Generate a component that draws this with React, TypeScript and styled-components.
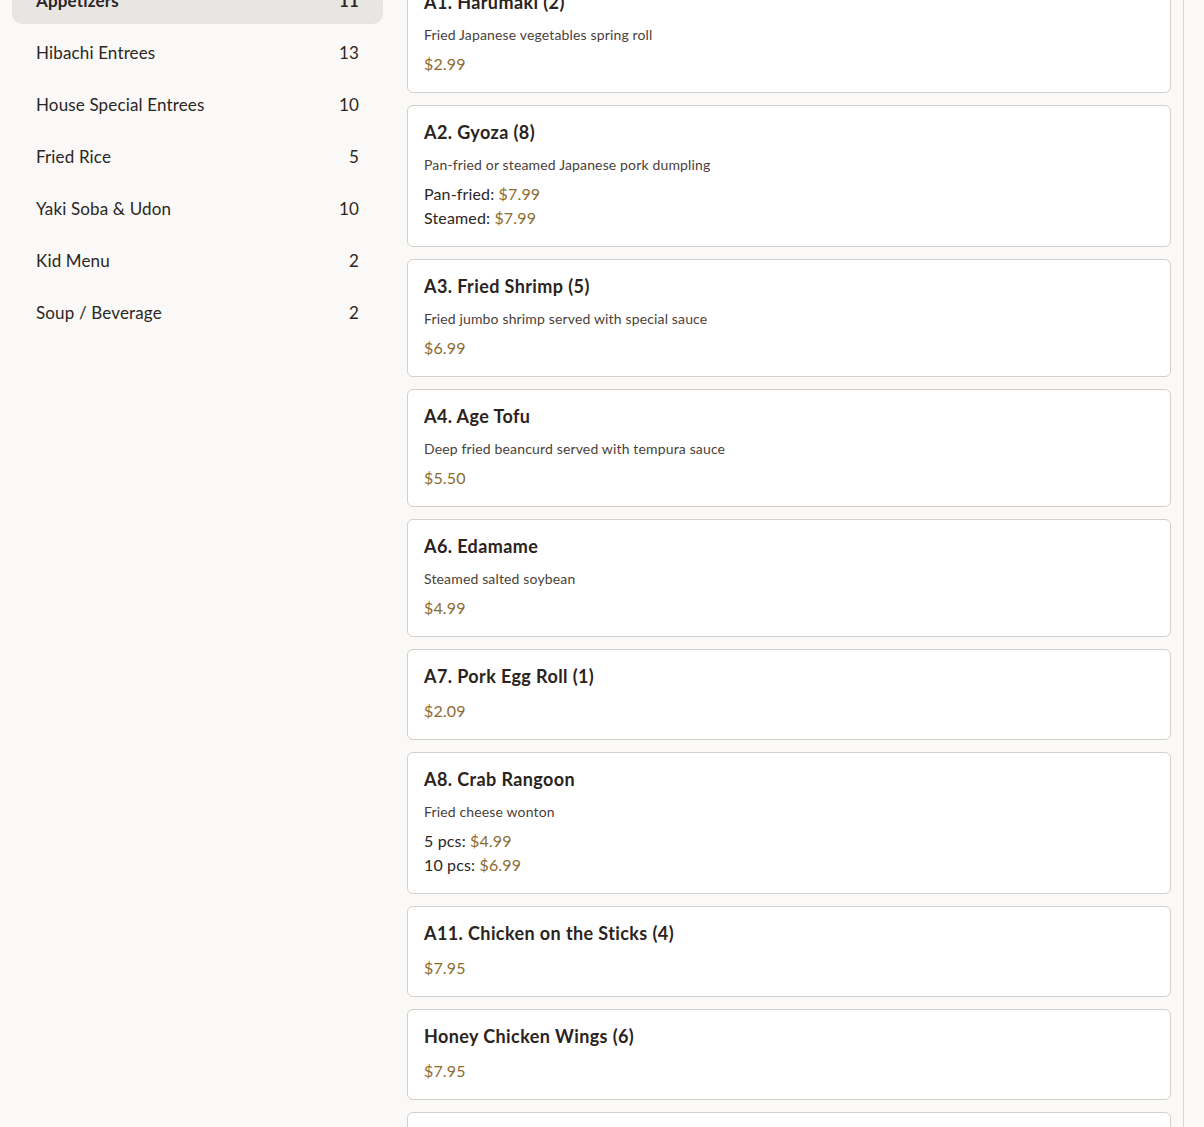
import React, { useLayoutEffect, useRef } from "react";
import styled, { createGlobalStyle } from "styled-components";

interface PriceOption {
  label?: string;
  price: string;
}

interface MenuItem {
  name: string;
  description?: string;
  prices: PriceOption[];
}

const GlobalStyle = createGlobalStyle`
  html, body {
    margin: 0;
    padding: 0;
    height: 100%;
    background: #faf9f7;
    overflow: hidden;
  }
  body {
    font-family: "Lato", "Noto Sans", sans-serif;
    color: #2b2623;
  }
  * {
    box-sizing: border-box;
  }
`;

const Scroller = styled.div`
  height: 100vh;
  width: 1184px;
  overflow-y: auto;
  border-right: 1px solid #d9d6d2;
  scrollbar-width: none;

  &::-webkit-scrollbar {
    display: none;
  }
`;

const Layout = styled.div`
  display: grid;
  grid-template-columns: 395px 1fr;
  align-items: start;
`;

const Sidebar = styled.nav`
  display: flex;
  flex-direction: column;
  gap: 4px;
  padding: 13px 12px 12px;
`;

const CategoryRow = styled.div<{ $active?: boolean }>`
  display: flex;
  align-items: center;
  justify-content: space-between;
  height: 48px;
  padding: 0 24px;
  border-radius: 10px;
  font-size: 17px;
  letter-spacing: 0.15px;
  font-weight: ${(props) => (props.$active ? 700 : 400)};
  background: ${(props) => (props.$active ? "#e8e6e3" : "transparent")};
  color: #2b2623;
  cursor: pointer;
`;

const Main = styled.main`
  display: flex;
  flex-direction: column;
  gap: 12px;
  padding: 12px;
`;

const Card = styled.div`
  background: #ffffff;
  border: 1px solid #d3cfca;
  border-radius: 6px;
  padding: 15px 16px 16px;
`;

const Title = styled.h3`
  margin: 0 0 12px;
  font-size: 18px;
  line-height: 22px;
  letter-spacing: 0.4px;
  font-weight: 700;
  color: #2b2320;
`;

const Description = styled.p`
  margin: 0 0 8px;
  font-size: 14px;
  line-height: 19px;
  letter-spacing: 0.15px;
  color: #4a3f39;
`;

const PriceLine = styled.div`
  font-size: 16px;
  line-height: 24px;
  letter-spacing: 0.15px;
  color: #2b2623;
`;

const Price = styled.span`
  color: #8b6c2f;
`;

const categories = [
  { name: "Appetizers", count: 11 },
  { name: "Hibachi Entrees", count: 13 },
  { name: "House Special Entrees", count: 10 },
  { name: "Fried Rice", count: 5 },
  { name: "Yaki Soba & Udon", count: 10 },
  { name: "Kid Menu", count: 2 },
  { name: "Soup / Beverage", count: 2 },
];

const items: MenuItem[] = [
  {
    name: "A1. Harumaki (2)",
    description: "Fried Japanese vegetables spring roll",
    prices: [{ price: "$2.99" }],
  },
  {
    name: "A2. Gyoza (8)",
    description: "Pan-fried or steamed Japanese pork dumpling",
    prices: [
      { label: "Pan-fried", price: "$7.99" },
      { label: "Steamed", price: "$7.99" },
    ],
  },
  {
    name: "A3. Fried Shrimp (5)",
    description: "Fried jumbo shrimp served with special sauce",
    prices: [{ price: "$6.99" }],
  },
  {
    name: "A4. Age Tofu",
    description: "Deep fried beancurd served with tempura sauce",
    prices: [{ price: "$5.50" }],
  },
  {
    name: "A6. Edamame",
    description: "Steamed salted soybean",
    prices: [{ price: "$4.99" }],
  },
  {
    name: "A7. Pork Egg Roll (1)",
    prices: [{ price: "$2.09" }],
  },
  {
    name: "A8. Crab Rangoon",
    description: "Fried cheese wonton",
    prices: [
      { label: "5 pcs", price: "$4.99" },
      { label: "10 pcs", price: "$6.99" },
    ],
  },
  {
    name: "A11. Chicken on the Sticks (4)",
    prices: [{ price: "$7.95" }],
  },
  {
    name: "Honey Chicken Wings (6)",
    prices: [{ price: "$7.95" }],
  },
  {
    name: "Shrimp Tempura (4)",
    description: "Lightly battered shrimp with tempura sauce",
    prices: [{ price: "$7.95" }],
  },
  {
    name: "Spring Roll (2)",
    prices: [{ price: "$2.99" }],
  },
];

const MenuCard: React.FC<{ item: MenuItem }> = ({ item }) => (
  <Card>
    <Title>{item.name}</Title>
    {item.description && <Description>{item.description}</Description>}
    {item.prices.map((p, i) => (
      <PriceLine key={i}>
        {p.label && `${p.label}: `}
        <Price>{p.price}</Price>
      </PriceLine>
    ))}
  </Card>
);

const App: React.FC = () => {
  const scrollRef = useRef<HTMLDivElement>(null);

  // the reference shows the list scrolled slightly down
  useLayoutEffect(() => {
    if (scrollRef.current) scrollRef.current.scrollTop = 37;
  }, []);

  return (
    <>
      <GlobalStyle />
      <Scroller ref={scrollRef}>
        <Layout>
          <Sidebar>
            {categories.map((c, i) => (
              <CategoryRow key={c.name} $active={i === 0}>
                <span>{c.name}</span>
                <span>{c.count}</span>
              </CategoryRow>
            ))}
          </Sidebar>
          <Main>
            {items.map((item) => (
              <MenuCard key={item.name} item={item} />
            ))}
          </Main>
        </Layout>
      </Scroller>
    </>
  );
};

export default App;
